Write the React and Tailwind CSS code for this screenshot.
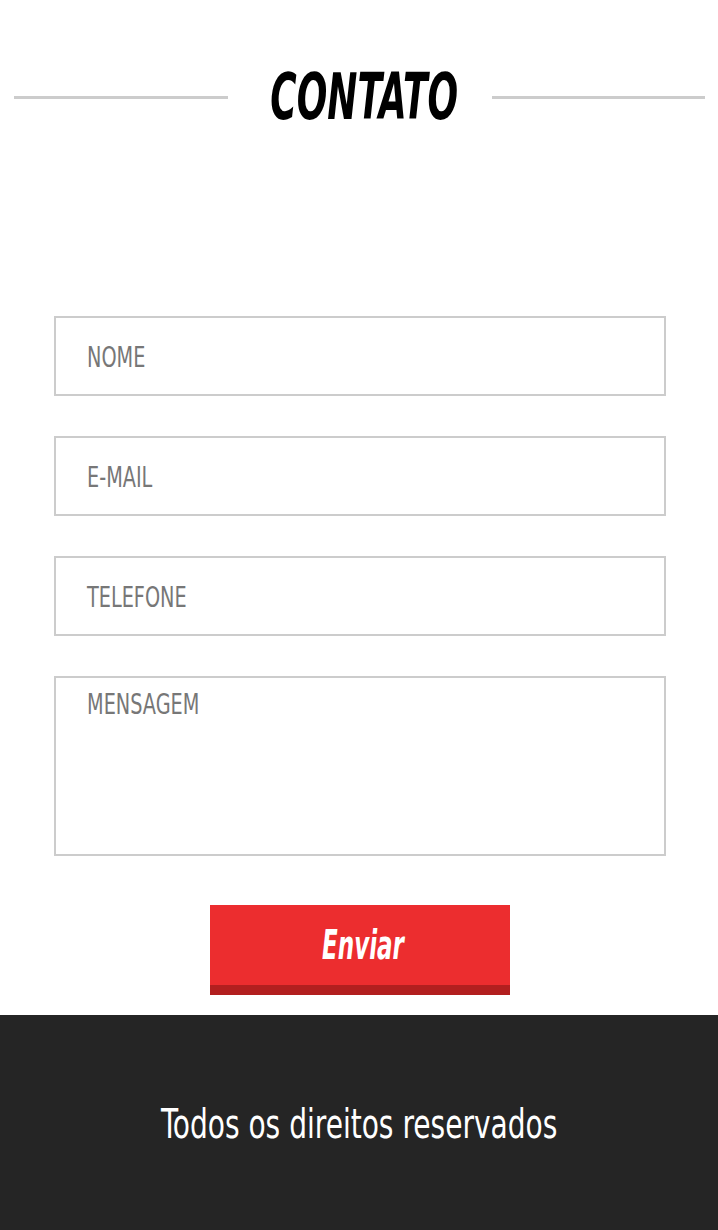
import React from "react";

const cond = { fontFamily: '"Liberation Sans Narrow", "DejaVu Sans Condensed", "Liberation Sans", sans-serif' };

function Field({ label, tall }) {
  return (
    <div
      className={`border-2 border-[#cccccc] bg-white ${tall ? "h-[180px] pt-[13px]" : "h-[80px] flex items-center pt-[3px]"} pl-[31px]`}
    >
      <span
        className="inline-block origin-left scale-x-[0.765] text-[28px] leading-none text-[#777777] whitespace-nowrap"
        style={cond}
      >
        {label}
      </span>
    </div>
  );
}

export default function App() {
  return (
    <div className="w-full bg-white">
      <section className="bg-white">
        <div className="h-[194px] flex items-center pl-[14px] pr-[13px]">
          <div className="flex-1 h-[3px] bg-[#cccccc]" />
          <div className="w-[264px] flex justify-center">
            <span
              className="inline-block ml-[9px] scale-x-[0.625] text-[64px] leading-none font-bold italic text-black whitespace-nowrap"
              style={cond}
            >
              CONTATO
            </span>
          </div>
          <div className="flex-1 h-[3px] bg-[#cccccc]" />
        </div>
        <form className="pt-[122px] pl-[54px] pr-[52px] flex flex-col gap-[40px]">
          <Field label="NOME" />
          <Field label="E-MAIL" />
          <Field label="TELEFONE" />
          <Field label="MENSAGEM" tall />
          <div className="flex justify-center mt-[9px] mb-[20px]">
            <button
              type="button"
              className="w-[300px] h-[90px] bg-[#ec2d2f] border-b-[10px] border-[#b21f1f] flex items-center justify-center"
            >
              <span
                className="inline-block ml-[6px] scale-x-[0.64] text-[40px] leading-none font-bold italic text-white"
                style={cond}
              >
                Enviar
              </span>
            </button>
          </div>
        </form>
      </section>
      <footer className="h-[215px] bg-[#252525] flex items-center justify-center">
        <span
          className="inline-block mt-[2px] scale-x-[0.78] text-[40px] leading-none text-white whitespace-nowrap"
          style={cond}
        >
          Todos os direitos reservados
        </span>
      </footer>
    </div>
  );
}
